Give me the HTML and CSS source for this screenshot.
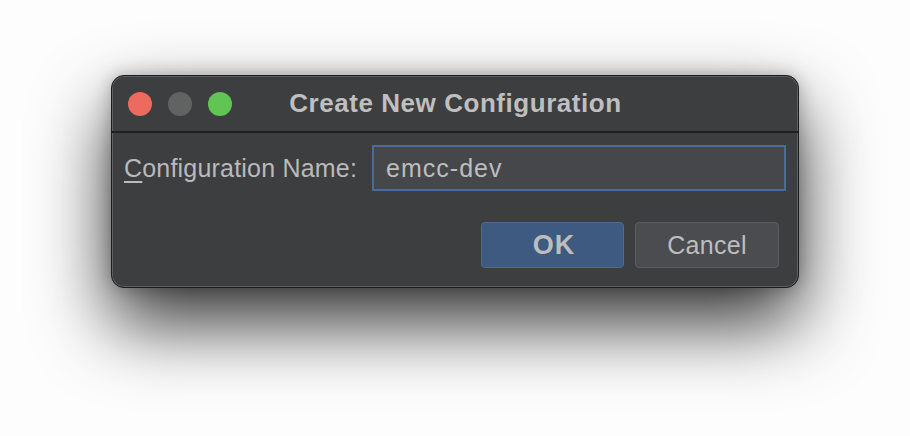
FILE: index.html
```html
<!DOCTYPE html>
<html>
<head>
<meta charset="utf-8">
<link rel="stylesheet" href="styles.css">
</head>
<body>
<div class="stage">
  <div class="window">
    <div class="titlebar">
      <div class="lights">
        <span class="light red"></span>
        <span class="light gray"></span>
        <span class="light green"></span>
      </div>
      <div class="title">Create New Configuration</div>
    </div>
    <div class="content">
      <div class="row">
        <label class="label"><span class="mn">C</span>onfiguration Name:</label>
        <div class="input">emcc-dev</div>
      </div>
      <div class="buttons">
        <div class="btn ok">OK</div>
        <div class="btn cancel">Cancel</div>
      </div>
    </div>
  </div>
</div>
</body>
</html>
```
FILE: styles.css
```css
html, body {
  margin: 0;
  padding: 0;
  background: #fdfdfd;
  width: 910px;
  height: 436px;
  overflow: hidden;
  font-family: "Liberation Sans", Arial, sans-serif;
}
.stage {
  display: flex;
  justify-content: center;
  padding-top: 75px;
}
.window {
  width: 688px;
  height: 213px;
  box-sizing: border-box;
  background: #3d3e40;
  border: 1px solid #1c1c1d;
  border-radius: 13px;
  box-shadow: inset 0 0 0 1px #5f6062, 0 35px 75px rgba(0,0,0,0.8), 0 0 18px rgba(0,0,0,0.25);
  display: flex;
  flex-direction: column;
  overflow: hidden;
}
.titlebar {
  position: relative;
  height: 55px;
  border-bottom: 2px solid #1f1f20;
  display: flex;
  align-items: center;
  justify-content: center;
  flex-shrink: 0;
}
.lights {
  position: absolute;
  left: 16px;
  top: 16px;
  display: flex;
  gap: 16px;
}
.light {
  width: 24px;
  height: 24px;
  border-radius: 50%;
  display: block;
}
.red { background: #ec6a5e; }
.gray { background: #616262; }
.green { background: #60c553; }
.title {
  color: #bfbfbf;
  font-weight: bold;
  font-size: 26px;
  letter-spacing: 0.55px;
  margin-left: 1px;
}
.content {
  padding: 12px 12px 0 12px;
  display: flex;
  flex-direction: column;
}
.row {
  display: flex;
  align-items: center;
  gap: 15px;
}
.label {
  color: #b9babb;
  font-size: 25px;
  letter-spacing: 0.2px;
}
.mn {
  text-decoration: underline;
  text-decoration-thickness: 2px;
  text-underline-offset: 4px;
}
.input {
  flex: 1;
  height: 46px;
  box-sizing: border-box;
  border: 2px solid #4b6c9a;
  background: #46474a;
  color: #bdbdbe;
  font-size: 25px;
  letter-spacing: 1px;
  display: flex;
  align-items: center;
  padding-left: 12px;
}
.buttons {
  display: flex;
  justify-content: flex-end;
  gap: 11px;
  margin-top: 31px;
  padding-right: 7px;
}
.btn {
  width: 143px;
  height: 46px;
  box-sizing: border-box;
  border-radius: 4px;
  display: flex;
  align-items: center;
  justify-content: center;
  font-size: 25px;
  color: #bdbdbe;
}
.ok {
  background: #3e5a80;
  border: 1px solid #4d6a92;
  font-weight: bold;
  font-size: 27px;
  letter-spacing: 1px;
  padding-left: 3px;
}
.cancel {
  width: 144px;
  background: #4b4c4f;
  border: 1px solid #5c5d60;
  letter-spacing: 0.3px;
}
```
